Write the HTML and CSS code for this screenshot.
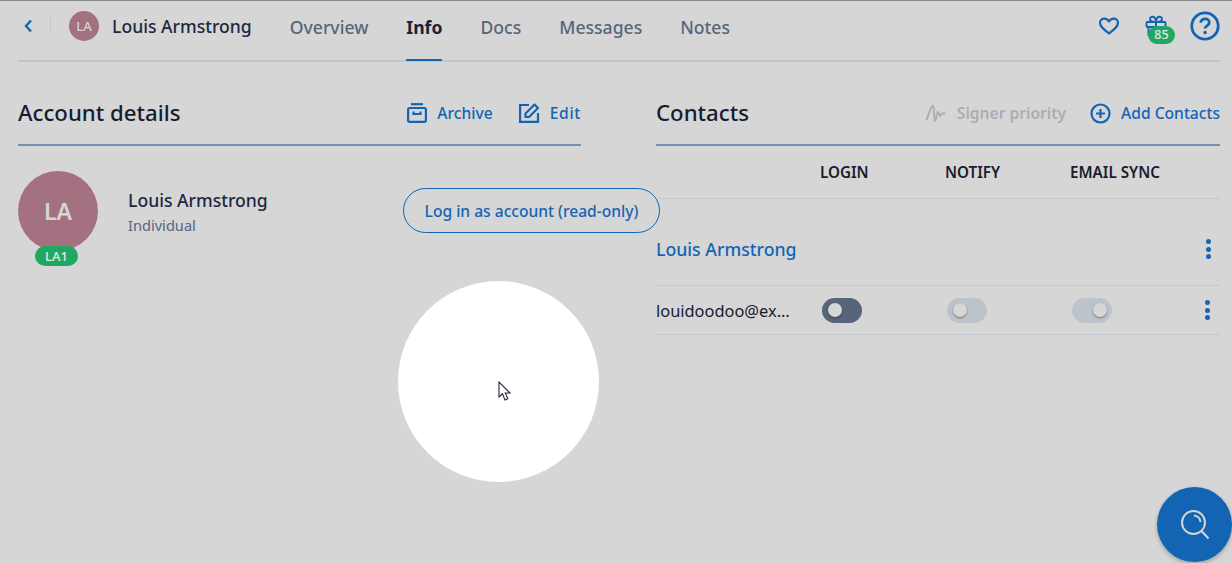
FILE: index.html
```html
<!DOCTYPE html>
<html lang="en">
<head>
    <meta charset="UTF-8">
    <meta name="viewport" content="width=device-width, initial-scale=1.0">
    <title>Louis Armstrong - Info</title>
    <link rel="stylesheet" href="styles.css">
</head>
<body>
    <header class="topbar">
        <button class="back-btn" aria-label="Back">
            <svg width="10" height="16" viewBox="0 0 10 16"><path d="M8 2.500 3 8l5 5.500" fill="none" stroke="#1464b4" stroke-width="2.400"/></svg>
        </button>
        <span class="topbar-sep"></span>
        <span class="avatar-small">LA</span>
        <span class="topbar-name">Louis Armstrong</span>
        <nav class="tabs">
            <a class="tab">Overview</a>
            <a class="tab active">Info</a>
            <a class="tab">Docs</a>
            <a class="tab">Messages</a>
            <a class="tab">Notes</a>
        </nav>
        <div class="topbar-icons">
            <svg class="heart" width="22" height="20" viewBox="0 0 22 20"><path d="M11 17.500C6 13.600 2 10.800 2 6.800 2 4.200 4 2.600 6.200 2.600 8.300 2.600 10 3.800 11 5.500 12 3.800 13.700 2.600 15.800 2.600 18 2.600 20 4.200 20 6.800 20 10.800 16 13.600 11 17.500Z" fill="none" stroke="#1464b4" stroke-width="2.200" stroke-linejoin="round"/></svg>
            <div class="gift">
                <svg width="22" height="22" viewBox="0 0 22 22"><g fill="none" stroke="#1464b4" stroke-width="2"><rect x="1.500" y="7" width="19" height="5" rx="1"/><path d="M3.500 12v8h15v-8M11 7v13"/><path d="M11 7C8 7 5 6.500 5 4s3-3 4.500-1.500S11 7 11 7ZM11 7c3 0 6-.5 6-3s-3-3-4.500-1.500S11 7 11 7Z"/></g></svg>
                <span class="gift-count">85</span>
            </div>
            <svg width="30" height="30" viewBox="0 0 30 30"><circle cx="15" cy="15" r="13.200" fill="none" stroke="#1464b4" stroke-width="2.800"/><path d="M10.800 11.800c0-2.600 2-4 4.300-4s4.200 1.400 4.200 3.600c0 3.400-4.200 3.200-4.200 6.200" fill="none" stroke="#1464b4" stroke-width="2.800"/><circle cx="15.100" cy="21.600" r="1.800" fill="#1464b4"/></svg>
        </div>
    </header>

    <main class="columns">
        <section class="panel">
            <div class="panel-head">
                <h2>Account details</h2>
                <div class="actions actions-wide">
                    <a class="action">
                        <svg width="20" height="20" viewBox="0 0 20 20"><g fill="none" stroke="#1464b4" stroke-width="2.200"><path d="M4 1.200h12"/><rect x="1.100" y="5" width="17.800" height="13.800" rx="1.500"/><path d="M6.500 8.500v2.500h7V8.500"/></g></svg>
                        Archive
                    </a>
                    <a class="action action-edit">
                        <svg width="21" height="20" viewBox="0 0 21 20"><g fill="none" stroke="#1464b4" stroke-width="2.200"><path d="M10 2H1.100v16.900H19V10"/><path d="M6.500 14v-3.500L15.500 1.500l3.500 3.500-9 9Z" stroke-linejoin="round"/></g></svg>
                        Edit
                    </a>
                </div>
            </div>
            <div class="profile">
                <div class="avatar-wrap">
                    <div class="avatar-large">LA</div>
                    <span class="avatar-tag">LA1</span>
                </div>
                <div class="profile-text">
                    <div class="profile-name">Louis Armstrong</div>
                    <div class="profile-type">Individual</div>
                </div>
                <button class="login-btn">Log in as account (read-only)</button>
            </div>
        </section>

        <section class="panel">
            <div class="panel-head">
                <h2>Contacts</h2>
                <div class="actions">
                    <a class="action disabled">
                        <svg width="22" height="22" viewBox="0 0 22 22"><path d="M1.500 18C4 12 6 3.500 8 3.500c1.800 0 .5 15.500 2 15.500 1.500 0 1.500-9 3-9s1 4 2.200 4c1 0 1-2.500 2.300-2.500h3" fill="none" stroke="#aaaeb5" stroke-width="2"/></svg>
                        Signer priority
                    </a>
                    <a class="action">
                        <svg width="21" height="21" viewBox="0 0 21 21"><circle cx="10.500" cy="10.500" r="9" fill="none" stroke="#1464b4" stroke-width="2.200"/><path d="M10.500 6v9M6 10.500h9" stroke="#1464b4" stroke-width="2.200"/></svg>
                        Add Contacts
                    </a>
                </div>
            </div>
            <div class="contact-cols">
                <span></span>
                <span>LOGIN</span>
                <span>NOTIFY</span>
                <span>EMAIL SYNC</span>
                <span></span>
            </div>
            <div class="contact-name-row">
                <a class="contact-name">Louis Armstrong</a>
                <span class="dots"><i></i><i></i><i></i></span>
            </div>
            <div class="contact-row">
                <span class="contact-email">louidoodoo@ex…</span>
                <span class="toggle on"></span>
                <span class="toggle off"></span>
                <span class="toggle off right"></span>
                <span class="dots"><i></i><i></i><i></i></span>
            </div>
        </section>
    </main>

    <div class="spotlight"></div>
    <svg class="cursor" width="14" height="21" viewBox="0 0 14 21"><path d="M1 1v15l3.500-3.200L7 19l2.800-1.200-2.500-5.800H12Z" fill="#fff" stroke="#24283a" stroke-width="1.100"/></svg>

    <button class="search-fab" aria-label="Search">
        <svg width="32" height="32" viewBox="0 0 32 32"><g fill="none" stroke="#d6d6d6" stroke-width="2"><circle cx="14.500" cy="13.500" r="11.500"/><path d="M15 6.500a7 7 0 0 1 6.500 6.500M22.500 22l7 7.500"/></g></svg>
    </button>
</body>
</html>
```

FILE: styles.css
```css
:root {
    --bg-color: #d6d6d6;
    --blue: #1464b4;
    --dark: #1e2740;
    --slate: #56657a;
    --line: #bfc5cb;
    --head-line: #7292b4;
    --green: #20a862;
}

* {
    box-sizing: border-box;
}

html, body {
    height: 100%;
}

body {
    margin: 0;
    padding: 0 12px 0 18px;
    background: var(--bg-color);
    border-top: 1px solid #8a8a8a;
    font-family: "Noto Sans", "Open Sans", sans-serif;
    color: var(--dark);
    overflow: hidden;
}

.topbar {
    display: flex;
    align-items: center;
    height: 61px;
    padding-bottom: 10px;
    border-bottom: 2px solid var(--line);
}

.back-btn {
    display: flex;
    padding: 0;
    margin-left: 5px;
    background: none;
    border: none;
}

.topbar-sep {
    width: 1px;
    height: 18px;
    margin: 0 18px 0 17px;
    background: #c4c8cc;
}

.avatar-small {
    display: flex;
    align-items: center;
    justify-content: center;
    width: 30px;
    height: 30px;
    border-radius: 50%;
    background: #a3717f;
    color: #d6d6d6;
    font-size: 13px;
    font-weight: 500;
}

.topbar-name {
    margin-left: 13px;
    font-size: 17.600px;
    font-weight: 500;
    white-space: nowrap;
}

.tabs {
    display: flex;
    gap: 38px;
    align-self: flex-start;
    height: 60px;
    margin-left: 38px;
}

.tab {
    display: flex;
    align-items: center;
    height: 60px;
    padding-bottom: 7px;
    color: var(--slate);
    font-size: 17.600px;
    font-weight: 500;
    border-bottom: 2px solid transparent;
}

.tab.active {
    color: #1c2236;
    font-weight: 700;
    border-bottom-color: var(--blue);
}

.topbar-icons {
    display: flex;
    align-items: center;
    margin-left: auto;
}

.gift {
    position: relative;
    display: flex;
    margin: 0 23px 0 25px;
}

.gift-count {
    position: absolute;
    left: 3px;
    top: 11px;
    width: 27px;
    height: 18px;
    border-radius: 9px;
    background: var(--green);
    color: #e6e6e6;
    font-size: 12.500px;
    font-weight: 500;
    line-height: 18px;
    text-align: center;
}

.columns {
    display: grid;
    grid-template-columns: 563px 564px;
    gap: 75px;
}

.panel-head {
    display: flex;
    align-items: center;
    justify-content: space-between;
    height: 84px;
    padding-top: 20px;
    border-bottom: 2px solid var(--head-line);
}

h2 {
    margin: -2px 0 0;
    font-size: 22.200px;
    font-weight: 500;
    color: #161c30;
}

.actions {
    display: flex;
    gap: 24px;
}

.actions-wide {
    gap: 26px;
}

.action {
    display: flex;
    align-items: center;
    gap: 10px;
    color: var(--blue);
    font-size: 15.600px;
    font-weight: 500;
    white-space: nowrap;
}

.action-edit {
    letter-spacing: 0.7px;
}

.action.disabled {
    color: #aaaeb5;
    font-weight: 600;
}

.profile {
    display: flex;
    align-items: flex-start;
    padding-top: 25px;
}

.avatar-wrap {
    position: relative;
    flex-shrink: 0;
    width: 80px;
    height: 80px;
}

.avatar-large {
    display: flex;
    align-items: center;
    justify-content: center;
    width: 80px;
    height: 80px;
    border-radius: 50%;
    background: #a3717f;
    color: #d6d6d6;
    font-size: 23px;
    font-weight: 600;
}

.avatar-tag {
    position: absolute;
    left: 17px;
    top: 75px;
    width: 43px;
    height: 20px;
    border-radius: 10px;
    background: var(--green);
    color: #e6e6e6;
    font-size: 13px;
    font-weight: 500;
    line-height: 20px;
    text-align: center;
}

.profile-text {
    flex-shrink: 0;
    width: 275px;
    margin-left: 30px;
    padding-top: 17px;
}

.profile-name {
    font-size: 17.600px;
    font-weight: 500;
}

.profile-type {
    margin-top: 3px;
    color: var(--slate);
    font-size: 14.600px;
}

.login-btn {
    flex-shrink: 0;
    width: 257px;
    height: 45px;
    margin-top: 17px;
    padding: 0;
    background: none;
    border: 1px solid var(--blue);
    border-radius: 23px;
    color: var(--blue);
    font-family: inherit;
    font-size: 15.600px;
    font-weight: 500;
    white-space: nowrap;
}

.contact-cols,
.contact-row {
    display: grid;
    grid-template-columns: 164px 125px 125px 125px 1fr;
    align-items: center;
}

.contact-cols {
    height: 53px;
    padding-bottom: 1px;
    border-bottom: 1px solid #c4c8cc;
    font-size: 15.200px;
    font-weight: 600;
    color: #181c2c;
}

.contact-name-row {
    display: flex;
    align-items: center;
    justify-content: space-between;
    height: 87px;
    padding: 14px 9px 0 0;
    border-bottom: 1px solid #c4c8cc;
}

.contact-name {
    color: var(--blue);
    font-size: 17.700px;
    font-weight: 500;
}

.contact-row {
    height: 49px;
    border-bottom: 1px solid #c4c8cc;
}

.contact-row .dots {
    justify-self: end;
    margin-right: 10px;
}

.contact-email {
    white-space: nowrap;
    font-size: 16.400px;
    color: #181c2c;
}

.dots {
    display: flex;
    flex-direction: column;
    gap: 2.500px;
}

.dots i {
    width: 5px;
    height: 5px;
    border-radius: 50%;
    background: var(--blue);
}

.toggle {
    position: relative;
    display: block;
    width: 40px;
    height: 25px;
    margin-left: 2px;
    border-radius: 13px;
}

.toggle::after {
    content: "";
    position: absolute;
    top: 5px;
    left: 6px;
    width: 14px;
    height: 14px;
    border-radius: 50%;
    background: #d6d6d6;
    box-shadow: 0 1px 2px rgba(0, 0, 0, 0.4);
}

.toggle.on {
    background: #56657a;
}

.toggle.off {
    background: #bcc3ca;
}

.toggle.right::after {
    left: 21px;
}

.spotlight {
    position: absolute;
    left: 398px;
    top: 281px;
    width: 201px;
    height: 201px;
    border-radius: 50%;
    background: #fff;
}

.cursor {
    position: absolute;
    left: 498px;
    top: 381px;
}

.search-fab {
    position: absolute;
    left: 1157px;
    top: 487px;
    display: flex;
    align-items: center;
    justify-content: center;
    width: 75px;
    height: 75px;
    padding: 0;
    border: none;
    border-radius: 50%;
    background: var(--blue);
    box-shadow: 0 2px 4px rgba(0, 0, 0, 0.25);
}
```
